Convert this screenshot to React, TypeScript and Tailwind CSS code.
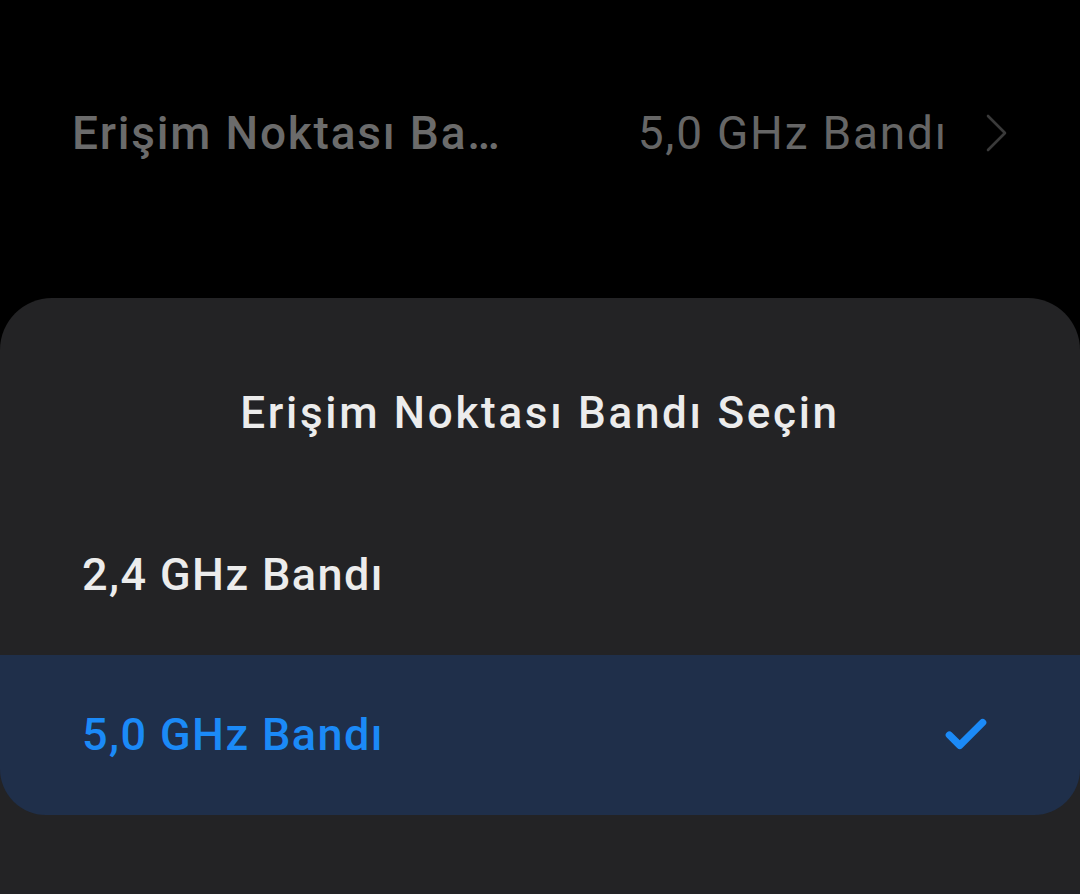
import { Check } from "lucide-react";

export default function App() {
  return (
    <main className="w-[1080px] h-[894px] overflow-hidden bg-black font-['Roboto',sans-serif]">
      {/* Settings row behind the sheet */}
      <div className="h-[298px] pt-[98px]">
        <div className="h-[70px] flex items-center pl-[72px] pr-[72px]">
          <span className="text-[46px] font-medium text-[#6b6b6b] tracking-[1.8px] whitespace-nowrap">
            Erişim Noktası Ba…
          </span>
          <span className="ml-auto text-[46px] text-[#666666] tracking-[1.8px] whitespace-nowrap">5,0 GHz Bandı</span>
          <svg viewBox="0 0 24 40" className="ml-[36px] w-[24px] h-[40px]" fill="none">
            <path d="M4 3 21 20 4 37" stroke="#3a3a3a" strokeWidth="2.6" strokeLinecap="round" strokeLinejoin="round" />
          </svg>
        </div>
      </div>

      {/* Bottom sheet */}
      <section className="bg-[#232325] rounded-t-[52px] h-[596px]">
        <div className="pt-[80px] pb-[46px] text-center">
          <h2 className="h-[70px] leading-[70px] text-[44px] font-medium text-[#ececec] tracking-[2.7px]">
            Erişim Noktası Bandı Seçin
          </h2>
        </div>

        <div className="h-[161px] flex items-center pl-[82px] pr-[89px]">
          <span className="text-[45px] font-medium text-[#ececec] tracking-[1.4px]">2,4 GHz Bandı</span>
        </div>

        <div className="h-[160px] flex items-center pl-[82px] pr-[89px] bg-[#1f2f4a] rounded-b-[46px]">
          <span className="text-[45px] font-medium text-[#1b8af7] tracking-[1.4px]">5,0 GHz Bandı</span>
          <Check className="ml-auto w-[50px] h-[50px] text-[#1b8af7]" strokeWidth={3.5} />
        </div>
      </section>
    </main>
  );
}
